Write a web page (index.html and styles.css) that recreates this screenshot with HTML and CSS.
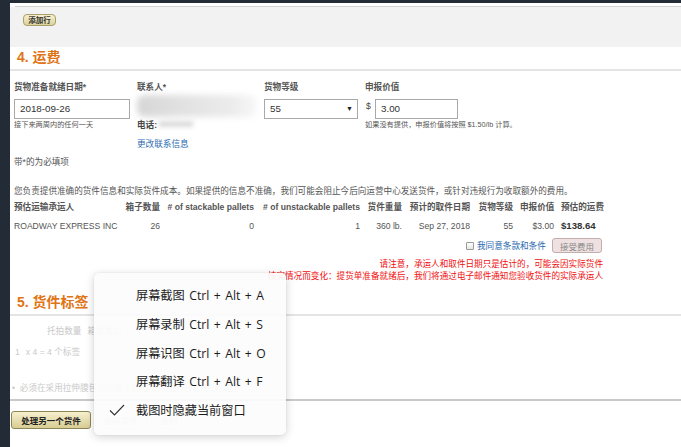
FILE: index.html
```html
<!DOCTYPE html>
<html lang="zh-CN">
<head>
<meta charset="utf-8">
<title>运费</title>
<link rel="stylesheet" href="styles.css">
</head>
<body>
<div class="frame">
  <div class="addrow-wrap">
    <div class="addrow-line"></div>
    <div class="addrow"><button class="btn-add">添加行</button></div>
  </div>

  <h2 class="sec-title">4. 运费</h2>
  <div class="rule"></div>

  <div class="form-row">
    <div class="col col-date">
      <div class="lbl">货物准备就绪日期*</div>
      <div class="field"><div class="input input-date">2018-09-26</div></div>
      <div class="hint">接下来两周内的任何一天</div>
    </div>
    <div class="col col-contact">
      <div class="lbl">联系人*</div>
      <div class="field"></div>
      <div class="phone"><b>电话:</b></div>
      <a class="link">更改联系信息</a>
      <div class="mosaic"></div>
      <div class="mosaic2"></div>
    </div>
    <div class="col col-class">
      <div class="lbl">货物等级</div>
      <div class="field"><div class="input select">55<span class="arrow">▼</span></div></div>
    </div>
    <div class="col col-value">
      <div class="lbl">申报价值</div>
      <div class="field"><span class="dollar">$</span><div class="input input-val">3.00</div></div>
      <div class="hint">如果没有提供，申报价值将按照 $1.50/lb 计算。</div>
    </div>
  </div>

  <div class="req">带*的为必填项</div>
  <p class="notice">您负责提供准确的货件信息和实际货件成本。如果提供的信息不准确，我们可能会阻止今后向运营中心发送货件，或针对违规行为收取额外的费用。</p>

  <div class="rates">
    <div class="th left">预估运输承运人</div>
    <div class="th">箱子数量</div>
    <div class="th">#&nbsp;of stackable pallets</div>
    <div class="th">#&nbsp;of unstackable pallets</div>
    <div class="th">货件重量</div>
    <div class="th">预计的取件日期</div>
    <div class="th">货物等级</div>
    <div class="th">申报价值</div>
    <div class="th left">预估的运费</div>

    <div class="td left">ROADWAY EXPRESS INC</div>
    <div class="td">26</div>
    <div class="td">0</div>
    <div class="td">1</div>
    <div class="td">360 lb.</div>
    <div class="td">Sep 27, 2018</div>
    <div class="td">55</div>
    <div class="td">$3.00</div>
    <div class="td left total">$138.64</div>
  </div>

  <div class="accept-row">
    <span class="checkbox"></span>
    <a class="link agree">我同意条款和条件</a>
    <button class="btn-accept">接受费用</button>
  </div>

  <div class="warn">
    <div>请注意，承运人和取件日期只是估计的，可能会因实际货件</div>
    <div>核实情况而变化：提货单准备就绪后，我们将通过电子邮件通知您验收货件的实际承运人</div>
  </div>

  <h2 class="sec-title sec5">5. 货件标签</h2>
  <div class="rule"></div>

  <div class="faded">
    <div class="lab-head"><span>托拍数量</span><span>箱数类型</span></div>
    <div class="lab-count"><span>1</span><span>x 4 = 4 个标签</span></div>
    <div class="lab-note">•&nbsp; 必须在采用拉伸膜包装的每个托拍的四面都贴上托拍标签。</div>
  </div>
  <div class="rule rule-dark"></div>

  <div class="actions">
    <button class="btn-main">处理另一个货件</button>
    <button class="btn-faded">删除货件</button>
    <button class="btn-faded btn-copy">复制</button>
  </div>
</div>

<div class="ctx-menu">
  <div class="item">屏幕截图 Ctrl + Alt + A</div>
  <div class="item">屏幕录制 Ctrl + Alt + S</div>
  <div class="item">屏幕识图 Ctrl + Alt + O</div>
  <div class="item">屏幕翻译 Ctrl + Alt + F</div>
  <div class="item checked">
    <svg class="check" width="16" height="12" viewBox="0 0 16 12"><path d="M1 6.5 L5.5 11 L15 1" fill="none" stroke="#333" stroke-width="1.1"/></svg>
    截图时隐藏当前窗口
  </div>
</div>
</body>
</html>
```

FILE: styles.css
```css
html, body {
  margin: 0;
  padding: 0;
  background: #ffffff;
}
body {
  font-family: "Liberation Sans", "Noto Sans CJK SC", sans-serif;
  font-size: 8.6px;
  color: #444;
  width: 681px;
  height: 447px;
  overflow: hidden;
  position: relative;
}
.frame {
  box-sizing: border-box;
  height: 447px;
  border-top: 3px solid #232b37;
  border-left: 10px solid #232b37;
  overflow: hidden;
}
.addrow-wrap {
  padding-top: 3px;
}
.addrow-line {
  margin-left: 5px;
  height: 1px;
  background: #d4d4d4;
}
.addrow {
  background: #f2f2f2;
  height: 40px;
  box-sizing: border-box;
  padding: 7px 0 0 13px;
}
.btn-add {
  display: block;
  width: 33px;
  height: 12px;
  padding: 0;
  border: 1px solid #a99f6a;
  border-radius: 4px;
  background: linear-gradient(#f7f1cf, #ddd29a);
  font-family: "Noto Sans CJK SC", sans-serif;
  font-size: 7.5px;
  line-height: 10px;
  font-weight: 700;
  color: #333;
}
.sec-title {
  margin: 2px 0 0 7px;
  font-family: "Liberation Sans", "Noto Sans CJK SC", sans-serif;
  font-size: 14px;
  line-height: 17px;
  font-weight: 700;
  color: #e07415;
}
.rule {
  margin-top: 3px;
  height: 2px;
  background: #e4e4e4;
}
.form-row {
  display: flex;
  margin: 10px 0 0 4px;
}
.col {
  position: relative;
  flex: none;
}
.col-date { width: 123px; }
.col-contact { width: 127px; }
.col-class { width: 101px; }
.col-value { width: 200px; }
.lbl {
  line-height: 12px;
  font-weight: 700;
  color: #555;
}
.field {
  display: flex;
  align-items: flex-start;
  height: 20px;
  margin-top: 6px;
}
.input {
  box-sizing: border-box;
  height: 20px;
  border: 1px solid #a9a9a9;
  background: #fff;
  font-size: 9.8px;
  line-height: 18px;
  padding-left: 5px;
  color: #333;
}
.input-date { width: 116px; }
.select {
  width: 94px;
  position: relative;
  display: flex;
  justify-content: space-between;
  padding-right: 4px;
}
.arrow {
  font-size: 7px;
  color: #222;
}
.dollar {
  width: 9px;
  margin-left: 1px;
  line-height: 14px;
  color: #444;
}
.input-val { width: 83px; }
.hint {
  font-size: 7.2px;
  line-height: 12px;
  color: #555;
}
.phone {
  line-height: 12px;
  color: #444;
}
.link {
  display: block;
  margin-top: 7px;
  line-height: 12px;
  color: #2a6ab0;
}
.mosaic {
  position: absolute;
  left: 0px;
  top: 14px;
  width: 120px;
  height: 22px;
  border-radius: 8px;
  background: linear-gradient(90deg, #d6d6d6, #e2e2e2 40%, #ececec 80%, #f8f8f8);
  filter: blur(3px);
}
.mosaic2 {
  position: absolute;
  left: 22px;
  top: 40px;
  width: 34px;
  height: 6px;
  background: #dcdcdc;
  filter: blur(2px);
}
.req {
  margin: 6px 0 0 4px;
  line-height: 12px;
  color: #555;
}
.notice {
  margin: 17px 0 0 4px;
  line-height: 12px;
  color: #555;
}
.rates {
  display: grid;
  grid-template-columns: 104px 35px 87px 99px 35px 61px 36px 34px 44px;
  column-gap: 7px;
  row-gap: 7px;
  margin: 4px 0 0 4px;
  white-space: nowrap;
}
.th, .td {
  line-height: 12px;
  text-align: right;
}
.th {
  font-weight: 700;
  color: #555;
}
.td {
  color: #555;
}
.left { text-align: left; }
.total {
  font-weight: 700;
  font-size: 9.6px;
  color: #333;
}
.accept-row {
  display: flex;
  align-items: center;
  margin: 6px 0 0 456px;
  height: 15px;
}
.checkbox {
  box-sizing: border-box;
  width: 8px;
  height: 8px;
  border: 1px solid #999;
  border-radius: 1px;
  background: linear-gradient(#fff, #e6e6e6);
}
.agree {
  margin: 0 0 0 3px;
  width: 75px;
}
.btn-accept {
  box-sizing: border-box;
  width: 50px;
  height: 15px;
  padding: 0;
  border: 1px solid #c3aeae;
  border-radius: 3px;
  background: #efe1e1;
  font-family: "Noto Sans CJK SC", sans-serif;
  font-size: 8.5px;
  color: #888;
}
.warn {
  margin-top: 5px;
  width: 593px;
  text-align: right;
  line-height: 12px;
  color: #f01010;
}
.sec5 {
  margin-top: 12px;
}
.faded {
  color: #cacaca;
}
.lab-head {
  margin: 9px 0 0 37px;
  line-height: 12px;
  display: flex;
  gap: 6px;
}
.lab-count {
  margin: 9px 0 0 5px;
  line-height: 12px;
  display: flex;
  gap: 6px;
}
.lab-note {
  margin: 24px 0 0 2px;
  line-height: 12px;
}
.rule-dark {
  margin-top: 5px;
  background: #c9c9c9;
}
.actions {
  display: flex;
  gap: 4px;
  margin: 10px 0 0 1px;
}
.actions button {
  box-sizing: border-box;
  height: 18px;
  padding: 0;
  border-radius: 3px;
  font-family: "Noto Sans CJK SC", sans-serif;
  font-size: 8.5px;
  font-weight: 700;
}
.btn-main {
  width: 80px;
  border: 1px solid #8d8657;
  background: linear-gradient(#f6f0cf, #d8cd92);
  color: #222;
}
.btn-faded {
  width: 52px;
  border: 1px solid #e6e6e6;
  background: #fbfbfb;
  color: #d0d0d0;
}
.btn-copy { width: 36px; }
.ctx-menu {
  position: absolute;
  left: 94px;
  top: 273px;
  width: 192px;
  height: 162px;
  box-sizing: border-box;
  padding-top: 9px;
  background: rgba(252, 252, 252, 0.93);
  border-radius: 5px;
  box-shadow: 0 2px 10px rgba(0, 0, 0, 0.18), 0 0 1px rgba(0, 0, 0, 0.2);
  font-family: "Open Sans", "Noto Sans CJK SC", sans-serif;
  font-size: 12.2px;
  word-spacing: 1.3px;
  color: #1b1b1b;
}
.item {
  position: relative;
  height: 28.8px;
  line-height: 28.8px;
  padding-left: 42px;
  white-space: nowrap;
}
.check {
  position: absolute;
  left: 15px;
  top: 7px;
}
```
